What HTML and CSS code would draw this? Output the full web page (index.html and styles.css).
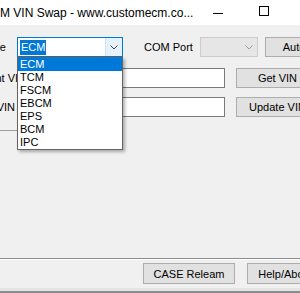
FILE: index.html
```html
<!DOCTYPE html>
<html lang="en">
<head>
  <meta charset="UTF-8">
  <title>VIN Swap</title>
  <link rel="stylesheet" href="styles.css">
</head>
<body>
  <div class="window">
    <div class="titlebar">
      <span class="title">M VIN Swap - www.customecm.co...</span>
      <span class="ctl"><span class="glyph-min"></span></span>
      <span class="ctl"><span class="glyph-max"></span></span>
    </div>

    <div class="content">
      <div class="row row-top">
        <div class="label label-type"><span>Module Type</span></div>
        <div class="combo combo-focus">
          <span class="combo-text"><span class="selected">ECM</span></span>
          <span class="combo-arrow">
            <svg width="8" height="5" viewBox="0 0 8 5"><polyline points="0.5,0.5 4,4 7.5,0.5" fill="none" stroke="#444" stroke-width="1"/></svg>
          </span>
          <ul class="droplist">
            <li class="active">ECM</li>
            <li>TCM</li>
            <li>FSCM</li>
            <li>EBCM</li>
            <li>EPS</li>
            <li>BCM</li>
            <li>IPC</li>
          </ul>
        </div>
        <span class="com-label">COM Port</span>
        <div class="combo combo-disabled">
          <span class="combo-text"></span>
          <span class="combo-arrow">
            <svg width="8" height="5" viewBox="0 0 8 5"><polyline points="0.5,0.5 4,4 7.5,0.5" fill="none" stroke="#9a9a9a" stroke-width="1"/></svg>
          </span>
        </div>
        <button class="btn btn-auto">Auto</button>
      </div>

      <div class="row row-field row-current">
        <div class="label"><span>Current VIN</span></div>
        <div class="textbox"></div>
        <button class="btn btn-side">Get VIN</button>
      </div>

      <div class="row row-field row-new">
        <div class="label"><span>New VIN</span></div>
        <div class="textbox"></div>
        <button class="btn btn-side">Update VIN</button>
      </div>

      <div class="group-line"></div>
    </div>

    <div class="footer">
      <button class="btn btn-foot">CASE Releam</button>
      <button class="btn btn-foot btn-help">Help/About</button>
    </div>
  </div>
</body>
</html>
```

FILE: styles.css
```css
* {
  margin: 0;
  padding: 0;
  box-sizing: border-box;
}

body {
  width: 300px;
  height: 293px;
  overflow: hidden;
  background: #f0f0f0;
  font-family: "Liberation Sans", Arial, sans-serif;
  font-size: 11px;
  color: #000;
}

.window {
  width: 300px;
  height: 293px;
  display: flex;
  flex-direction: column;
}

/* title bar */
.titlebar {
  height: 25px;
  background: #fff;
  display: flex;
  align-items: center;
  flex-shrink: 0;
}

.title {
  flex: 0 0 194px;
  white-space: nowrap;
  font-size: 12px;
  padding-top: 1px;
}

.ctl {
  flex: 0 0 47px;
  height: 25px;
  display: flex;
  align-items: center;
  justify-content: center;
}

.glyph-min {
  width: 10px;
  height: 1px;
  background: #000;
  margin-top: 1px;
}

.glyph-max {
  width: 10px;
  height: 10px;
  border: 1px solid #000;
  margin-top: -4px;
  margin-left: -2px;
}

/* form rows */
.content {
  padding-top: 12px;
}

.row {
  display: flex;
  align-items: center;
  height: 20px;
}

.label {
  display: flex;
  justify-content: flex-end;
  overflow: hidden;
  white-space: nowrap;
  flex-shrink: 0;
}

.label-type {
  width: 17px;
  padding-right: 11px;
}

.combo {
  position: relative;
  height: 20px;
  display: flex;
  background: #fff;
  flex-shrink: 0;
}

.combo-focus {
  width: 106px;
  border: 1px solid #0078d7;
}

.combo-text {
  flex: 1;
  display: flex;
  align-items: center;
  padding-left: 2px;
}

.selected {
  background: #0078d7;
  color: #fff;
  padding: 1px 1px;
  line-height: 13px;
}

.combo-arrow {
  width: 17px;
  display: flex;
  align-items: center;
  justify-content: center;
}

.combo-focus .combo-arrow {
  background: #e5f1fb;
  border-left: 1px solid #cce4f7;
}

.droplist {
  position: absolute;
  top: 19px;
  left: -1px;
  width: 106px;
  list-style: none;
  background: #fff;
  border: 1px solid #646464;
  box-shadow: 2px 2px 3px rgba(0, 0, 0, 0.3);
  z-index: 5;
}

.droplist li {
  height: 13px;
  line-height: 13px;
  padding-left: 2px;
}

.droplist li.active {
  background: #0078d7;
  color: #fff;
}

.com-label {
  width: 77px;
  padding-left: 21px;
  flex-shrink: 0;
  white-space: nowrap;
}

.combo-disabled {
  width: 58px;
  background: #e6e6e6;
  border: 1px solid #cccccc;
}

.btn {
  font-family: inherit;
  font-size: 11px;
  color: #000;
  background: #e1e1e1;
  border: 1px solid #adadad;
  flex-shrink: 0;
  white-space: nowrap;
}

.btn-auto {
  width: 58px;
  height: 20px;
  margin-left: 7px;
}

.row-current {
  margin-top: 11px;
}

.row-new {
  margin-top: 9px;
}

.row-field .label {
  width: 30px;
}

.row-current .label {
  padding-right: 4px;
}

.row-new .label {
  padding-right: 15px;
}

.textbox {
  width: 195px;
  height: 20px;
  background: #fff;
  border: 1px solid #7a7a7a;
  flex-shrink: 0;
}

.btn-side {
  width: 83px;
  height: 20px;
  margin-left: 11px;
}

.group-line {
  width: 60px;
  height: 1px;
  background: #a0a0a0;
  margin-top: 13px;
}

/* bottom strip */
.footer {
  margin-top: auto;
  height: 35px;
  display: flex;
  gap: 12px;
  padding: 4px 0 0 143px;
  border-top: 1px solid #8c8c8c;
  border-bottom: 2px solid #8c8c8c;
  box-shadow: inset 0 1px 0 #fff, inset 0 -3px 0 #e3e3e3;
  flex-shrink: 0;
}

.btn-foot {
  width: 92px;
  height: 21px;
}

.btn-help {
  width: 77px;
}
```
